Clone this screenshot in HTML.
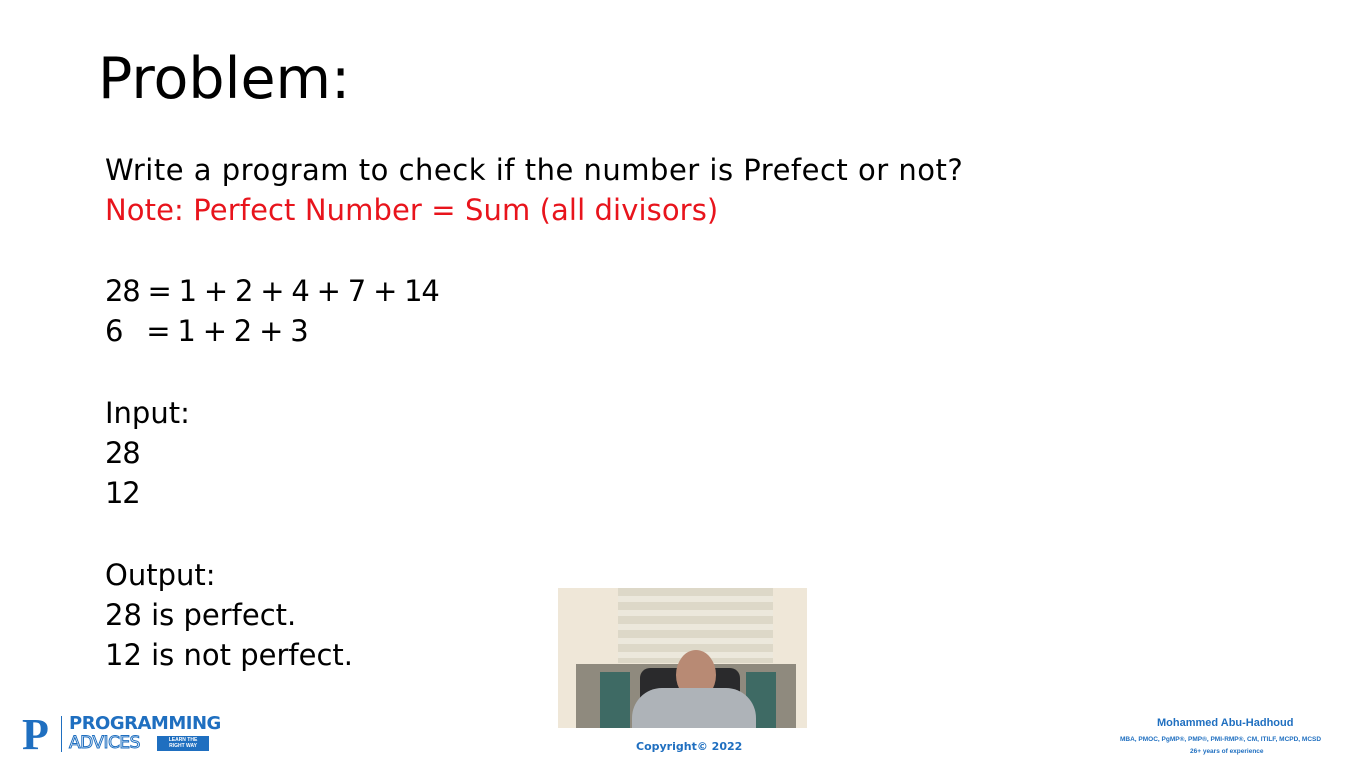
<!DOCTYPE html>
<html><head><meta charset="utf-8"><style>
body{margin:0;width:1366px;height:768px;background:#fff;position:relative;overflow:hidden;font-family:"Comic Sans MS","DejaVu Sans","Liberation Sans",sans-serif;color:#000}
.t{position:absolute;white-space:nowrap}
.b{font-size:29px;left:105px}
.n{letter-spacing:-1.2px}
</style></head><body>
<div class="t" style="left:98px;top:46px;font-size:57px;">Problem:</div>
<div class="t b" style="top:153px;letter-spacing:0.5px">Write a program to check if the number is Prefect or not?</div>
<div class="t b" style="top:193px;color:#e8141c;letter-spacing:0.1px">Note: Perfect Number = Sum (all divisors)</div>
<div class="t b n" style="top:274px;">28 = 1 + 2 + 4 + 7 + 14</div>
<div class="t b n" style="top:314px;">6 &nbsp; = 1 + 2 + 3</div>
<div class="t b" style="top:396px;">Input:</div>
<div class="t b n" style="top:436px;">28</div>
<div class="t b n" style="top:476px;">12</div>
<div class="t b" style="top:558px;">Output:</div>
<div class="t b" style="top:598px;">28 is perfect.</div>
<div class="t b" style="top:638px;">12 is not perfect.</div>

<div style="position:absolute;left:558px;top:588px;width:249px;height:140px;background:#efe7d8;overflow:hidden">
 <div style="position:absolute;left:60px;top:0;width:155px;height:75px;background:repeating-linear-gradient(#ddd8c8 0 8px,#ece8dc 8px 14px)"></div>
 <div style="position:absolute;left:18px;top:76px;width:220px;height:64px;background:#8f8a7e"></div>
 <div style="position:absolute;left:42px;top:84px;width:30px;height:56px;background:#3e6a64"></div>
 <div style="position:absolute;left:188px;top:84px;width:30px;height:56px;background:#3e6a64"></div>
 <div style="position:absolute;left:82px;top:80px;width:100px;height:60px;background:#2a2a2c;border-radius:10px 10px 0 0"></div>
 <div style="position:absolute;left:118px;top:62px;width:40px;height:50px;background:#b88a74;border-radius:50%"></div>
 <div style="position:absolute;left:74px;top:100px;width:124px;height:50px;background:#aeb3b8;border-radius:30px 30px 0 0"></div>
</div>
<div class="t" style="left:636px;top:740px;font-size:11px;font-weight:bold;color:#1f6fc0">Copyright© 2022</div>

<div class="t" style="left:22px;top:713px;font-size:44px;font-weight:bold;color:#1f6fc0;font-family:'Liberation Serif',serif;line-height:44px">P</div>
<div style="position:absolute;left:61px;top:716px;width:1px;height:36px;background:#1f6fc0"></div>
<div class="t" style="left:69px;top:713px;font-size:18px;font-weight:bold;color:#1f6fc0;letter-spacing:-0.5px">PROGRAMMING</div>
<div class="t" style="left:69px;top:733px;font-size:17px;color:#fff;-webkit-text-stroke:1px #1f6fc0;letter-spacing:-0.5px">ADVICES</div>
<div style="position:absolute;left:157px;top:736px;width:52px;height:15px;background:#1f6fc0;color:#fff;font-size:5px;font-weight:bold;line-height:6px;text-align:center;padding-top:1px;box-sizing:border-box;font-family:'Liberation Sans',sans-serif">LEARN THE<br>RIGHT WAY</div>

<div class="t" style="left:1157px;top:717px;font-size:11px;font-weight:bold;color:#1f6fc0;font-family:'Liberation Sans',sans-serif">Mohammed Abu-Hadhoud</div>
<div class="t" style="left:1120px;top:736px;font-size:6.5px;font-weight:bold;color:#1f6fc0;font-family:'Liberation Sans',sans-serif">MBA, PMOC, PgMP®, PMP®, PMI-RMP®, CM, ITILF, MCPD, MCSD</div>
<div class="t" style="left:1190px;top:748px;font-size:6.5px;font-weight:bold;color:#1f6fc0;font-family:'Liberation Sans',sans-serif">26+ years of experience</div>
</body></html>
